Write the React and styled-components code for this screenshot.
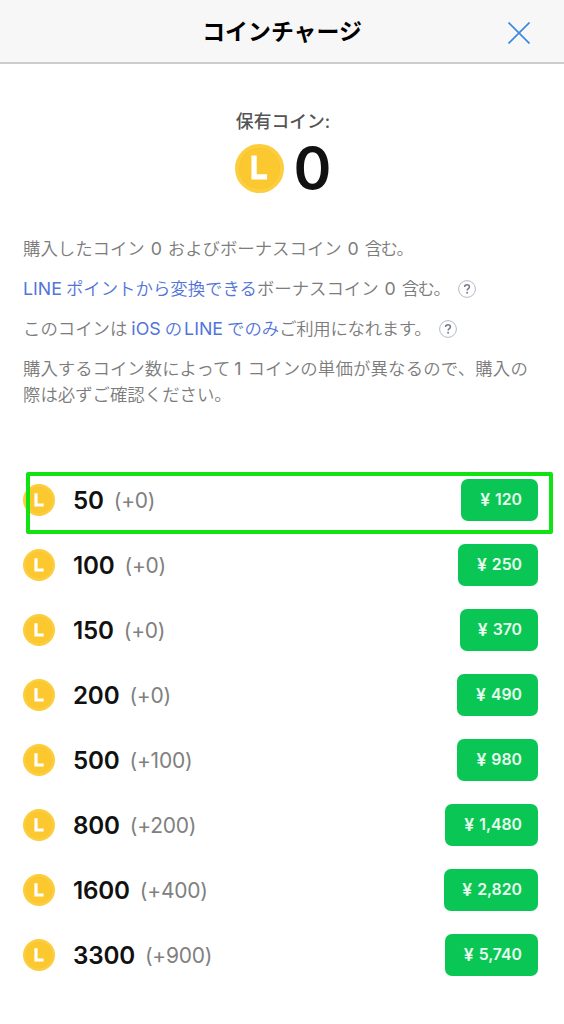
import React from "react";
import styled, { createGlobalStyle } from "styled-components";

const GlobalStyle = createGlobalStyle`
  * {
    box-sizing: border-box;
  }
  body {
    margin: 0;
    background-color: #fff;
    font-family: Inter, "Noto Sans CJK JP", sans-serif;
    color: #111;
  }
`;

const Page = styled.div`
  width: 564px;
  height: 1024px;
  overflow: hidden;
  background-color: #fff;
`;

const Header = styled.header`
  display: grid;
  grid-template-columns: 1fr auto 1fr;
  align-items: center;
  height: 64px;
  padding: 0 34px;
  background-color: #f7f7f7;
  border-bottom: 2px solid #cdcdcd;
`;

const Title = styled.h1`
  grid-column: 2;
  margin: 2px 0 0;
  font-size: 22.9px;
  line-height: 32px;
  font-weight: 700;
  color: #000;
`;

const CloseButton = styled.button`
  justify-self: end;
  display: flex;
  margin-top: 4px;
  padding: 0;
  border: 0;
  background: none;
`;

const Balance = styled.section`
  display: flex;
  flex-direction: column;
  align-items: center;
  padding-top: 45px;
`;

const BalanceLabel = styled.div`
  padding-left: 2px;
  font-size: 17.8px;
  line-height: 26px;
  font-weight: 500;
  color: #555;
`;

const BalanceAmount = styled.div`
  display: flex;
  align-items: center;
  gap: 10px;
  height: 64px;
  margin-top: 1px;
  padding-left: 2px;
  font-size: 57.5px;
  line-height: 66px;
  font-weight: 620;
`;

const Notes = styled.section`
  display: flex;
  flex-direction: column;
  gap: 14px;
  padding: 36px 0 0 23px;
`;

const Note = styled.p`
  margin: 0;
  font-size: 17.4px;
  line-height: 26px;
  font-weight: 350;
  color: #7c7c7c;
  white-space: nowrap;
`;

const NoteLink = styled.span`
  color: #5274d8;
`;

const Latin = styled.span`
  margin: 0 ${(props) => props.$right || 0}px 0 ${(props) => props.$left || 0}px;
  font-size: 17.8px;
  font-weight: 400;
`;

const Spaced = styled.span`
  letter-spacing: ${(props) => props.$by}px;
`;

const HelpIcon = styled.svg`
  margin-left: ${(props) => props.$gap}px;
  vertical-align: -3px;
`;

const CoinList = styled.ul`
  list-style: none;
  margin: 59px 0 0;
  padding: 0;
`;

const CoinRow = styled.li`
  position: relative;
  display: flex;
  align-items: center;
  height: 65px;
  padding: 0 26px 0 23px;
`;

const Highlight = styled.div`
  position: absolute;
  top: 5px;
  left: 26px;
  right: 11px;
  height: 62px;
  border: 4px solid #12e212;
  border-radius: 2px;
`;

const Amount = styled.span`
  margin-left: 18px;
  padding-top: 2px;
  font-size: 24.2px;
  line-height: 32px;
  font-weight: 600;
  letter-spacing: -0.2px;
`;

const Bonus = styled.span`
  margin-left: 10px;
  padding-top: 2px;
  font-size: 21px;
  line-height: 32px;
  letter-spacing: -0.25px;
  color: #808080;
`;

const PriceButton = styled.button`
  display: flex;
  align-items: center;
  justify-content: flex-end;
  gap: 4px;
  width: ${(props) => props.$width}px;
  height: 42px;
  margin: 0 0 0 auto;
  padding: 0 16px 0 0;
  border: 0;
  border-radius: 7px;
  background-color: #0ac755;
  color: #e9fbef;
  font-family: inherit;
  font-size: 15.8px;
  line-height: 20px;
  font-weight: 600;
`;

const Yen = styled.span`
  font-size: 17.5px;
  margin-right: 1px;
`;

const packs = [
  { coins: 50, bonus: 0, price: "120", width: 77, highlighted: true },
  { coins: 100, bonus: 0, price: "250", width: 80 },
  { coins: 150, bonus: 0, price: "370", width: 78 },
  { coins: 200, bonus: 0, price: "490", width: 81 },
  { coins: 500, bonus: 100, price: "980", width: 81 },
  { coins: 800, bonus: 200, price: "1,480", width: 93 },
  { coins: 1600, bonus: 400, price: "2,820", width: 94 },
  { coins: 3300, bonus: 900, price: "5,740", width: 93 },
];

function Coin({ size, small }) {
  return (
    <svg width={size} height={size} viewBox="0 0 48 48">
      <circle cx="24" cy="24" r="24" fill="#fccd3d" />
      <circle cx="24" cy="24" r="19.5" fill="#fcc830" stroke="#f9c433" />
      <path
        d={small ? "M19.5 14V31.5H31" : "M18.7 11.3V32.2H31.4"}
        fill="none"
        stroke="#fff"
        strokeWidth={small ? 4.8 : 5.2}
      />
    </svg>
  );
}

function Help({ gap }) {
  return (
    <HelpIcon $gap={gap} width="18" height="18" viewBox="0 0 18 18" fill="none">
      <circle cx="9" cy="9" r="8.4" stroke="#b4bac8" />
      <path
        d="M6.6 7.1C6.6 5.6 7.6 4.8 9 4.8s2.4.8 2.4 2.1c0 1.6-2.3 1.7-2.3 3.5"
        stroke="#777b86"
        strokeWidth="1.5"
      />
      <circle cx="9.1" cy="12.7" r=".95" fill="#777b86" />
    </HelpIcon>
  );
}

export default function App() {
  return (
    <Page>
      <GlobalStyle />
      <Header>
        <Title>コインチャージ</Title>
        <CloseButton aria-label="閉じる">
          <svg width="22" height="22" viewBox="0 0 22 22">
            <path
              d="M.5.5l21 21M21.5.5l-21 21"
              stroke="#3c8ae0"
              strokeWidth="1.7"
            />
          </svg>
        </CloseButton>
      </Header>
      <Balance>
        <BalanceLabel>保有コイン:</BalanceLabel>
        <BalanceAmount>
          <Coin size={49} />
          <span>0</span>
        </BalanceAmount>
      </Balance>
      <Notes>
        <Note>
          購入したコイン <Latin $left={1} $right={1}>0</Latin>{" "}
          およびボーナスコイン <Latin $left={1} $right={1}>0</Latin>{" "}
          <Spaced $by={-1.5}>含む。</Spaced>
        </Note>
        <Note>
          <NoteLink>
            <Latin $right={4}>LINE</Latin>ポイントから変換できる
          </NoteLink>
          ボーナスコイン <Latin $left={1} $right={1}>0</Latin>{" "}
          <Spaced $by={-1.5}>含む。</Spaced>
          <Help gap={9} />
        </Note>
        <Note>
          このコインは
          <NoteLink>
            <Latin $left={4} $right={4}>iOS</Latin>の
            <Latin $left={2} $right={4}>LINE</Latin>でのみ
          </NoteLink>
          <Spaced $by={-0.3}>ご利用になれます。</Spaced>
          <Help gap={8} />
        </Note>
        <Note>
          購入するコイン数によって
          <Latin $left={4} $right={6}>1</Latin>
          <Spaced $by={0.18}>コインの単価が異なるので、購入の</Spaced>
          <br />
          際は必ずご確認ください。
        </Note>
      </Notes>
      <CoinList>
        {packs.map((pack) => (
          <CoinRow key={pack.coins}>
            <Coin size={32} small />
            <Amount>{pack.coins}</Amount>
            <Bonus>(+{pack.bonus})</Bonus>
            <PriceButton $width={pack.width}>
              <Yen>¥</Yen>
              <span>{pack.price}</span>
            </PriceButton>
            {pack.highlighted && <Highlight />}
          </CoinRow>
        ))}
      </CoinList>
    </Page>
  );
}
